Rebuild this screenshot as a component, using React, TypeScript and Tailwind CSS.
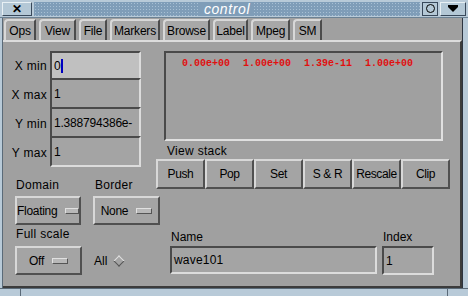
import React from 'react';

const font = { fontFamily: '"Liberation Sans", Arial, sans-serif' };

const Bevel = ({ className = '', children }: { className?: string; children?: React.ReactNode }) => (
  <div className={`border-2 border-t-[#d8d8d8] border-l-[#d8d8d8] border-b-[#505050] border-r-[#505050] bg-[#a4a4a4] flex items-center justify-center ${className}`}>
    {children}
  </div>
);

const Sunken = ({ className = '', children }: { className?: string; children?: React.ReactNode }) => (
  <div className={`border-2 border-t-[#4a4a4a] border-l-[#4a4a4a] border-b-[#dcdcdc] border-r-[#dcdcdc] flex items-center px-[2px] ${className}`}>
    {children}
  </div>
);

const Option = ({ label, w }: { label: string; w: string }) => (
  <Bevel className={`${w} h-[29px] gap-[8px] text-[12px]`}>
    <span className="tracking-[-0.3px]">{label}</span>
    <span className="w-[16px] h-[6px] border border-t-[#e0e0e0] border-l-[#e0e0e0] border-b-[#555] border-r-[#555] bg-[#b8b8b8]" />
  </Bevel>
);

const tabs = [
  { t: 'Ops', w: 'w-[32px]' },
  { t: 'View', w: 'w-[37px]' },
  { t: 'File', w: 'w-[28px]' },
  { t: 'Markers', w: 'w-[50px]' },
  { t: 'Browse', w: 'w-[47px]' },
  { t: 'Label', w: 'w-[35px]' },
  { t: 'Mpeg', w: 'w-[39px]' },
  { t: 'SM', w: 'w-[29px]' },
];

const fields = [
  { l: 'X min', v: '0', active: true },
  { l: 'X max', v: '1' },
  { l: 'Y min', v: '1.388794386e-' },
  { l: 'Y max', v: '1' },
];

export default function App() {
  return (
    <div className="w-[468px] h-[296px] bg-[#a0a0a0] flex flex-col text-black overflow-hidden" style={font}>
      {/* title bar */}
      <div className="h-[18px] bg-[#b8cad8] flex items-center px-[2px] gap-[2px] border-b border-[#6c8294]">
        <div className="w-[30px] h-[14px] bg-[#b4c8d6] border border-t-[#e8f0f4] border-l-[#e8f0f4] border-b-[#38485a] border-r-[#38485a] flex items-center justify-center text-[12px] font-bold leading-none">✕</div>
        <div className="flex-1 h-[14px] bg-[#7f9db8] bg-[radial-gradient(#a8c0d4_0.8px,transparent_0.9px)] bg-[length:3px_3px] flex items-center justify-center">
          <span className="text-white italic text-[14px] leading-none tracking-[0.6px] bg-[#7f9db8] px-[4px]">control</span>
        </div>
        <div className="w-[16px] h-[14px] bg-[#b4c8d6] border border-[#38485a] flex items-center justify-center">
          <div className="w-[9px] h-[9px] rounded-full border border-black" />
        </div>
        <div className="w-[26px] h-[14px] bg-[#b4c8d6] border border-t-[#e8f0f4] border-l-[#e8f0f4] border-b-[#38485a] border-r-[#38485a] flex flex-col items-center justify-center">
          <div className="w-[10px] h-[2px] bg-black" />
          <div className="w-0 h-0 border-l-[5px] border-r-[5px] border-t-[5px] border-l-transparent border-r-transparent border-t-black" />
        </div>
      </div>

      <div className="flex-1 flex">
        <div className="w-[3px] bg-[#b8cad8] border-r border-[#5a6a78]" />
        <div className="flex-1 flex flex-col">
          {/* tabs */}
          <div className="h-[22px] flex items-end gap-[3px] pl-[1px] bg-[#a0a0a0]">
            {tabs.map(tb => (
              <div key={tb.t} className={`${tb.w} h-[21px] bg-[#a8a8a8] border-2 border-b-0 border-t-[#d8d8d8] border-l-[#d8d8d8] border-r-[#4c4c4c] rounded-tl-[4px] flex items-center justify-center text-[12px] tracking-[-0.2px]`}>
                {tb.t}
              </div>
            ))}
          </div>
          {/* panel */}
          <div className="flex-1 border-t-2 border-t-[#dcdcdc] border-r-2 border-r-[#3c3c3c] border-b-2 border-b-[#3c3c3c] flex">
            {/* left column */}
            <div className="w-[153px] flex flex-col pt-[9px]">
              {fields.map((f, i) => (
                <div key={f.l} className="flex items-center h-[29px]">
                  <span className="w-[46px] text-right text-[12px] tracking-[0.3px] pr-[2px]">{f.l}</span>
                  <Sunken className={`ml-[1px] w-[91px] h-[29px] ${i > 0 ? '-mt-[2px] h-[31px]' : ''} ${f.active ? 'bg-[#c0c0c0]' : 'bg-[#a4a4a4]'}`}>
                    <span className="text-[12px] tracking-[-0.2px]">{f.v}</span>
                    {f.active && <span className="ml-[1px] w-[2px] h-[14px] bg-[#0000c0]" />}
                  </Sunken>
                </div>
              ))}
              <div className="flex gap-[12px] pl-[12px] mt-[11px]">
                <div className="flex flex-col gap-[4px]">
                  <span className="text-[12px] pl-[1px] leading-[14px] tracking-[0.3px]">Domain</span>
                  <Option label="Floating" w="w-[66px]" />
                </div>
                <div className="flex flex-col gap-[4px]">
                  <span className="text-[12px] pl-[2px] leading-[14px] tracking-[0.3px]">Border</span>
                  <Option label="None" w="w-[67px]" />
                </div>
              </div>
              <div className="flex flex-col gap-[5px] pl-[12px] mt-[2px]">
                <span className="text-[12px] pl-[1px] leading-[14px] tracking-[0.3px]">Full scale</span>
                <div className="flex items-center">
                  <Option label="Off" w="w-[67px]" />
                  <span className="text-[12px] ml-[12px]">All</span>
                  <span className="ml-[8px] w-[8px] h-[8px] rotate-45 border border-t-[#e0e0e0] border-l-[#e0e0e0] border-b-[#555] border-r-[#555] bg-[#a4a4a4]" />
                </div>
              </div>
            </div>
            {/* right column */}
            <div className="flex-1 flex flex-col pt-[9px]">
              <div className="ml-[8px] w-[279px] h-[90px] border-2 border-t-[#4a4a4a] border-l-[#4a4a4a] border-b-[#e0e0e0] border-r-[#e0e0e0] bg-[#a0a0a0] flex gap-[13px] pl-[16px] pt-[4px]" style={{ fontFamily: '"Liberation Mono", "Courier New", monospace' }}>
                {['0.00e+00', '1.00e+00', '1.39e-11', '1.00e+00'].map((v, i) => (
                  <span key={i} className="text-[10px] font-bold text-[#e01010] leading-[14px] tracking-[0px]">{v}</span>
                ))}
              </div>
              <span className="text-[12px] ml-[11px] mt-[3px] leading-[14px] tracking-[0.3px]">View stack</span>
              <div className="flex ml-0 mt-[1px]">
                {['Push', 'Pop', 'Set', 'S & R', 'Rescale', 'Clip'].map(b => (
                  <Bevel key={b} className="w-[49px] h-[30px] text-[12px] tracking-[-0.4px]">{b}</Bevel>
                ))}
              </div>
              <div className="flex ml-[14px] mt-[41px] gap-[5px]">
                <div className="flex flex-col gap-[2px]">
                  <span className="text-[12px] pl-[1px] leading-[14px]">Name</span>
                  <Sunken className="w-[207px] h-[28px] bg-[#a4a4a4]">
                    <span className="text-[12px] tracking-[0.2px]">wave101</span>
                  </Sunken>
                </div>
                <div className="flex flex-col gap-[2px]">
                  <span className="text-[12px] pl-[1px] leading-[14px]">Index</span>
                  <Sunken className="w-[52px] h-[29px] bg-[#a4a4a4]">
                    <span className="text-[12px]">1</span>
                  </Sunken>
                </div>
              </div>
            </div>
          </div>
        </div>
        <div className="w-[6px] bg-[#b8cad8] border-l border-[#2c3440]" />
      </div>
      <div className="h-[8px] bg-[#b8cad8] border-t border-[#5a6a78] flex">
        <div className="w-[21px] border-r border-[#5a6a78]" />
        <div className="flex-1" />
        <div className="w-[21px] border-l border-[#5a6a78]" />
      </div>
    </div>
  );
}
